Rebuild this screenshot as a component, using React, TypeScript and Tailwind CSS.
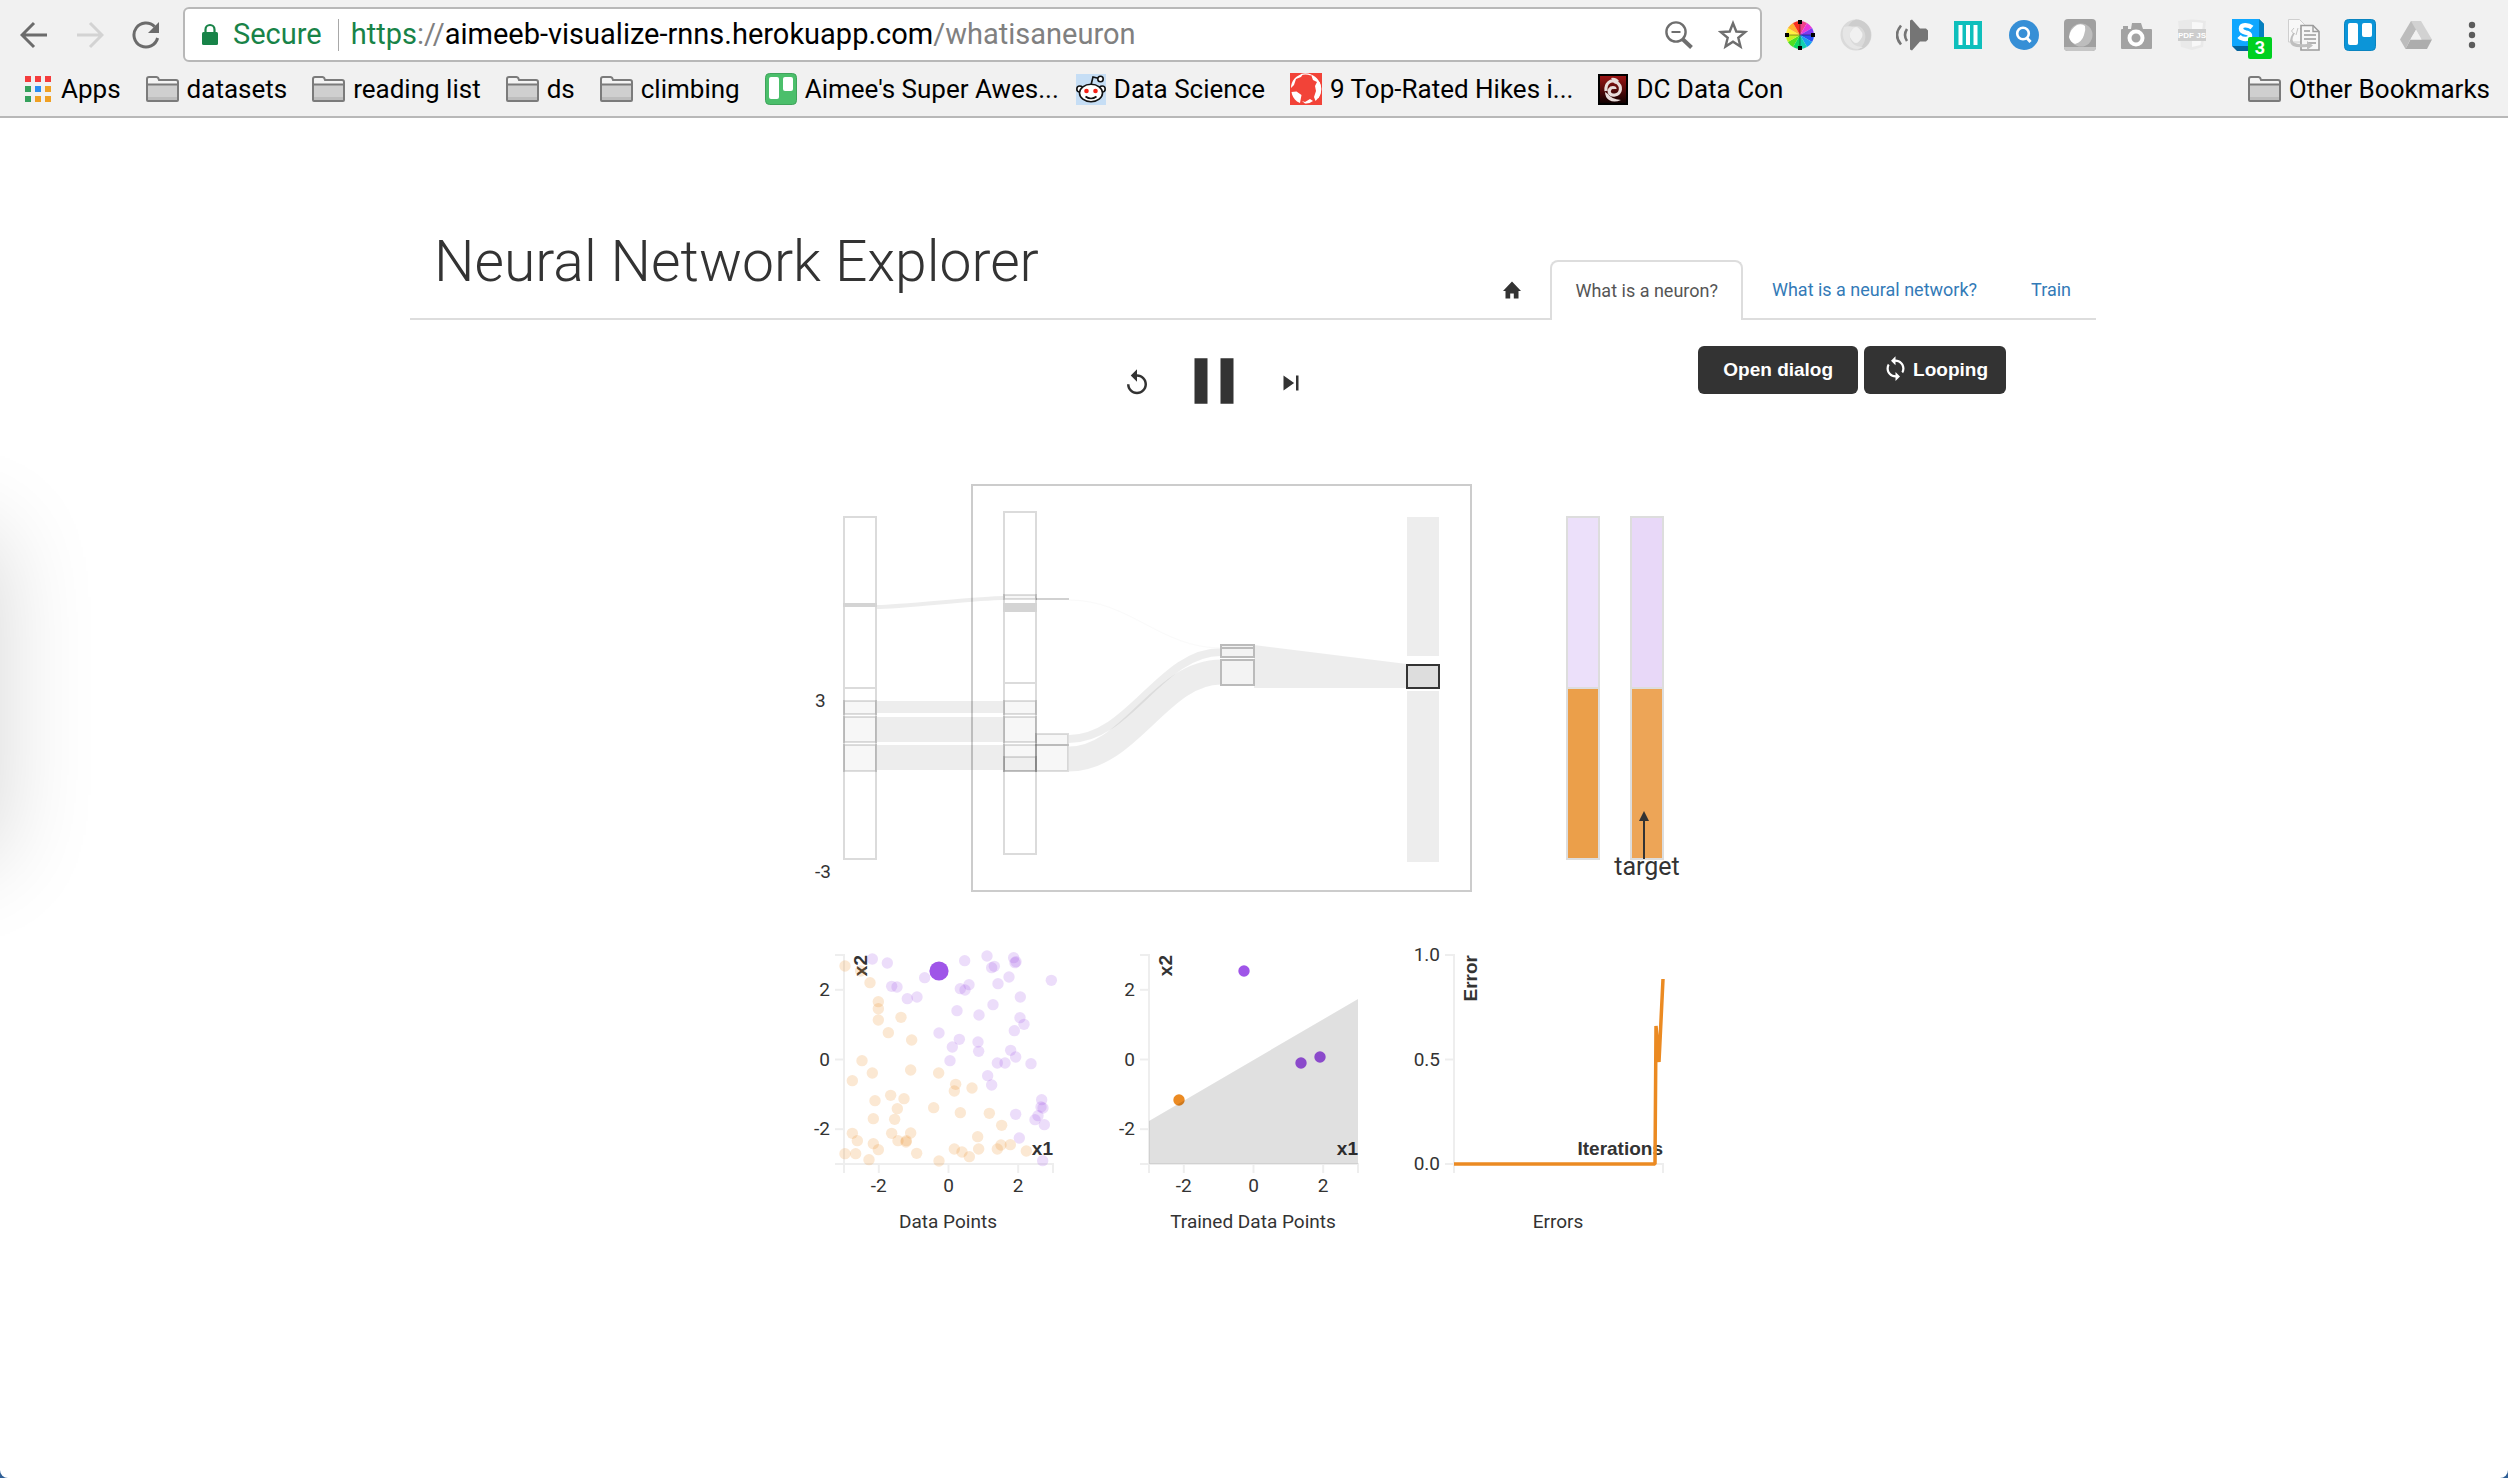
import type { ReactNode } from "react";
import { MdLoop, MdPause, MdReplay, MdSkipNext } from "react-icons/md";

/* ---------- Browser chrome icons ---------- */

function ArrowIcon({ flip = false, color }: { flip?: boolean; color: string }) {
  return (
    <svg width="28" height="28" viewBox="0 0 28 28" fill="none" stroke={color} strokeWidth="3" aria-hidden="true">
      <path d={flip ? "M1 14H26M14 2l12 12-12 12" : "M27 14H2M14 2L2 14l12 12"} />
    </svg>
  );
}

function ReloadIcon() {
  return (
    <svg width="28" height="28" viewBox="0 0 28 28" fill="none" aria-hidden="true">
      <path d="M22.6 5.6A12 12 0 1 0 25.6 17" stroke="#6b6b6b" strokeWidth="3" />
      <path d="M27 1v11H16z" fill="#6b6b6b" />
    </svg>
  );
}

function LockIcon() {
  return (
    <svg width="18" height="24" viewBox="0 0 18 24" aria-hidden="true">
      <path d="M4.5 10V6.5a4.5 4.5 0 0 1 9 0V10" fill="none" stroke="#188348" strokeWidth="2.2" />
      <rect x="1" y="9" width="16" height="13" rx="1.5" fill="#188348" />
    </svg>
  );
}

function ZoomOutIcon() {
  return (
    <svg width="30" height="30" viewBox="0 0 30 30" fill="none" stroke="#6e6e6e" aria-hidden="true">
      <circle cx="12" cy="12" r="9.6" strokeWidth="2.4" />
      <path d="M7.5 12h9" strokeWidth="2" />
      <path d="M18.5 19l9 8.5" strokeWidth="4" />
    </svg>
  );
}

function StarIcon() {
  return (
    <svg width="30" height="30" viewBox="0 0 30 30" fill="none" stroke="#6e6e6e" strokeWidth="2.4" aria-hidden="true">
      <path d="M15 3.2l3.3 8.3 8.900.6-6.900 5.700 2.200 8.700L15 21.700 7.500 26.500l2.200-8.700-6.900-5.700 8.900-.6z" />
    </svg>
  );
}

function FolderIcon() {
  return (
    <svg width="33" height="26" viewBox="0 0 33 26" aria-hidden="true">
      <path d="M1 24V3q0-2 2-2h7.500q1.200 0 1.700 1l.8 2H30q2 0 2 2v18q0 1-1 1H2q-1 0-1-1z" fill="#f4f4f4" stroke="#7b7b7b" strokeWidth="2" />
      <path d="M2 8.500h29V24H2z" fill="#cfcfcf" />
      <path d="M2 21h29v3H2z" fill="#bdbdbd" />
      <path d="M1 8.500h31" stroke="#7b7b7b" strokeWidth="2" />
    </svg>
  );
}

function AppsIcon() {
  const colors = ["#f43c3c", "#f43c3c", "#f43c3c", "#35a15c", "#2b8df0", "#f0a023", "#35a15c", "#f0a023", "#f0a023"];
  return (
    <svg width="26" height="26" viewBox="0 0 26 26" aria-hidden="true">
      {colors.map((c, i) => (
        <rect key={i} x={(i % 3) * 10} y={Math.floor(i / 3) * 10} width="6" height="6" fill={c} />
      ))}
    </svg>
  );
}

function TrelloIcon({ color, edge }: { color: string; edge: string }) {
  return (
    <svg width="32" height="32" viewBox="0 0 32 32" aria-hidden="true">
      <rect x=".5" y=".5" width="31" height="31" rx="4" fill={color} stroke={edge} />
      <rect x="4" y="4" width="10" height="22" rx="2" fill="#fff" />
      <rect x="18" y="4" width="10" height="14" rx="2" fill="#fff" />
    </svg>
  );
}

function RedditIcon() {
  return (
    <svg width="30" height="32" viewBox="0 0 30 32" aria-hidden="true">
      <rect width="30" height="31" y="1" fill="#c6def5" />
      <g fill="#fff" stroke="#111" strokeWidth="1.600">
        <path d="M15 12l2-8 6 1.500" fill="none" />
        <circle cx="24.500" cy="6" r="2.700" />
        <circle cx="3.800" cy="16" r="3" />
        <circle cx="26.200" cy="16" r="3" />
        <ellipse cx="15" cy="20" rx="11.500" ry="8.800" />
        <path d="M9.500 23.500q5.500 4 11 0" fill="none" />
      </g>
      <circle cx="10.500" cy="18" r="2.300" fill="#f52015" />
      <circle cx="19.500" cy="18" r="2.300" fill="#f52015" />
    </svg>
  );
}

function GlobeIcon() {
  return (
    <svg width="32" height="32" viewBox="0 0 32 32" aria-hidden="true">
      <rect width="32" height="32" fill="#f24338" />
      <path d="M13 1C6 2 1 8 1 15l3-3 2-6 5-2zM1.500 19l5-.5 5 3.500-1.500 8-3-1.500C4 26 2 23 1.500 19zM21 1.500c6 2 10 8 10 14.500 0 5-2 9-5.500 12L24 24l2-6-1-5 2-4-4-2zM12 28l3 1 5-3 3 2q-4 3-8 2.500z" fill="#fff" />
      <path d="M11 1.500q5-1.500 10 .5M29 9q4 8-1 16" fill="none" stroke="#fff" strokeWidth="1.200" />
    </svg>
  );
}

function SwirlIcon() {
  return (
    <svg width="30" height="31" viewBox="0 0 30 31" aria-hidden="true">
      <defs>
        <linearGradient id="swirl-bg" x1="0" y1="0" x2="0" y2="1">
          <stop offset="0" stopColor="#a01414" />
          <stop offset="1" stopColor="#0c0000" />
        </linearGradient>
      </defs>
      <rect x="1" y="1" width="28" height="29" fill="url(#swirl-bg)" stroke="#000" strokeWidth="2" />
      <path d="M8 17C7 9 13 5 18 8c7 4 5 12-1 13-5 1-7-3-5-6 1-2 5-2 5 0" fill="none" stroke="#e8dcda" strokeWidth="3.200" />
      <path d="M13 4q5-1 8 3l-4 3zM10 20q3 5 13 6-7 3-12 0-4-3-4-8z" fill="#e8dcda" />
    </svg>
  );
}

/* ---------- Extension icons, 32px each ---------- */

function Ext({ children }: { children: ReactNode }) {
  return (
    <svg width="32" height="32" viewBox="0 0 32 32" aria-hidden="true">
      {children}
    </svg>
  );
}

const WHEEL = ["#f0428a", "#e838d8", "#7a3cf0", "#2a50f5", "#18a0f0", "#10d0b0", "#10d860", "#50e020", "#c8f020", "#fff040", "#ffb030", "#f83020"];

function ColorWheelIcon() {
  const p = (a: number) => `${16 + 14 * Math.cos(a)} ${16 + 14 * Math.sin(a)}`;
  return (
    <Ext>
      {WHEEL.map((c, i) => {
        const a = -Math.PI / 2 + (i * Math.PI) / 6;
        return <path key={c} d={`M16 16L${p(a)}A14 14 0 0 1 ${p(a + Math.PI / 6)}z`} fill={c} />;
      })}
      <path d="M16 3v26M3 16h26" stroke="#000" strokeOpacity=".4" />
      <path d="M16 1v4M16 27v4M1 16h4M27 16h4" stroke="#000" strokeWidth="4" />
    </Ext>
  );
}

function RingIcon() {
  return (
    <Ext>
      <circle cx="16" cy="16" r="11" fill="none" stroke="#dadada" strokeWidth="9" />
      <path d="M16 .5a15.500 15.500 0 0 1 15 15.500 15 15 0 0 1-13 15c7-5 9-13 6-19-2-4-5-5-8-5-4 0-7 3-8 6C7 6 11 2 16 .5z" fill="#cdcdcd" />
      <path d="M4 8c-3 7-1 15 6 20 5 3 10 2 13 0-8 0-12-4-13-9-1-4 1-9 5-11-5-1-8-1-11 0z" fill="#e6e6e6" />
      <ellipse cx="16" cy="16" rx="5" ry="8" fill="#f1f1f1" />
    </Ext>
  );
}

function SpeakerIcon() {
  return (
    <Ext>
      <path d="M14 1.500l2-1 8 9h6l2 2v9l-2 2h-6l-8 9-2-1z" fill="#757575" />
      <path d="M11 10q-4 6 0 12M5 6.500q-8 9.500 0 19" fill="none" stroke="#757575" strokeWidth="2.600" />
    </Ext>
  );
}

function ColumnsIcon() {
  return (
    <Ext>
      <rect x="2" y="2" width="28" height="28" fill="#0fbfbc" />
      <path d="M8.500 6v20M16 6v20M23.500 6v20" stroke="#fff" strokeWidth="4" />
    </Ext>
  );
}

function SearchBadgeIcon() {
  return (
    <Ext>
      <circle cx="16" cy="16" r="15" fill="#368fd6" />
      <circle cx="15" cy="14.500" r="5.800" fill="none" stroke="#fff" strokeWidth="2.600" />
      <path d="M18.500 18.500l4 4.500" stroke="#fff" strokeWidth="3" />
    </Ext>
  );
}

function OrbIcon() {
  return (
    <Ext>
      <rect width="32" height="32" rx="4" fill="#a0a0a0" />
      <circle cx="17" cy="16" r="11.500" fill="#bdbdbd" />
      <path d="M0 28h32q0 4-4 4H4q-4 0-4-4z" fill="#c6c6c6" />
      <path d="M13 6q5-2 8 1 1 4-1 9-2 7-9 9-5-2-6-7 1-8 8-12z" fill="#fff" />
    </Ext>
  );
}

function CameraIcon() {
  return (
    <Ext>
      <path d="M2 10h1V7h5v3h3l1-6h9l2 6h8q1 0 1 1v18q0 1-1 1H2q-1 0-1-1V11q0-1 1-1z" fill="#a3a3a3" />
      <circle cx="16" cy="19" r="6.500" fill="none" stroke="#fff" strokeWidth="4" />
    </Ext>
  );
}

function PdfJsIcon() {
  return (
    <Ext>
      <path d="M2 2q14-3 28 0l-3 26-11 3-11-3z" fill="#e9e9e9" />
      <path d="M16 3q6 0 11 1l-2.500 22L16 28z" fill="#f8f8f8" />
      <rect x="2" y="10" width="28" height="12" fill="#cdcdcd" />
      <text x="16" y="19" textAnchor="middle" fontSize="8" fontWeight="700" fill="#fff" className="font-['Liberation_Sans']">PDF JS</text>
    </Ext>
  );
}

function SBlockIcon() {
  return (
    <Ext>
      <path d="M27 0l5 5v22l-5 0zM0 27h27l5 5H5z" fill="#04639c" />
      <path d="M27 0l5 5v22h-5z" fill="#0580bf" />
      <rect width="27" height="27" fill="#0fa7ff" />
      <path d="M20 8.500q-3-2.500-7-2.300-4 .3-4 3.300t4.500 4q4.500.8 4.500 3.300 0 3-4.500 3.200-4 0-6.500-2.500" fill="none" stroke="#fff" strokeWidth="4.500" />
    </Ext>
  );
}

function CopyDocIcon() {
  return (
    <Ext>
      <path d="M.5 .5h11l5 5V23H.5z" fill="#f8f8f8" stroke="#cfcfcf" />
      <path d="M6 9l-2.500 3L6 15M10 9l-2 7M12 9l2.500 3" fill="none" stroke="#c4c4c4" />
      <path d="M13 6.500h12l6 6V31H13z" fill="#f7f7f7" stroke="#9c9c9c" strokeWidth="1.600" />
      <path d="M25 6.500v6h6M16 12h6M16 16h12M16 20h12M19 24h9" fill="none" stroke="#9c9c9c" strokeWidth="1.400" />
      <path d="M7 14q-5 8 0 10 4 2 12 1v-3l6 4.500-6 4.500v-3q-10 1-14-1-6-4 0-13z" fill="#bfbfbf" />
    </Ext>
  );
}

function DriveIcon() {
  return (
    <Ext>
      <path d="M11 2h10L10 21l-4.500 9L0 20.500z" fill="#bcbcbc" />
      <path d="M11 2h10l11 18.500H21.500z" fill="#d2d2d2" />
      <path d="M10.500 20.500H32L27 30H5.500z" fill="#adadad" />
      <path d="M16 11l5.500 9.500h-11z" fill="#f1f1f1" />
    </Ext>
  );
}

function DotsIcon() {
  return (
    <Ext>
      <g fill="#5c5c5c">
        <circle cx="16" cy="6" r="3.200" />
        <circle cx="16" cy="16" r="3.200" />
        <circle cx="16" cy="26" r="3.200" />
      </g>
    </Ext>
  );
}

const EXTENSIONS: { name: string; icon: ReactNode; badge?: string }[] = [
  { name: "Color picker", icon: <ColorWheelIcon /> },
  { name: "Ring", icon: <RingIcon /> },
  { name: "Speaker", icon: <SpeakerIcon /> },
  { name: "Columns", icon: <ColumnsIcon /> },
  { name: "Search", icon: <SearchBadgeIcon /> },
  { name: "Orb", icon: <OrbIcon /> },
  { name: "Camera", icon: <CameraIcon /> },
  { name: "PDF viewer", icon: <PdfJsIcon /> },
  { name: "Blocks", icon: <SBlockIcon />, badge: "3" },
  { name: "Copy as document", icon: <CopyDocIcon /> },
  { name: "Boards", icon: <TrelloIcon color="#0c95d8" edge="#0a84c0" /> },
  { name: "Drive", icon: <DriveIcon /> },
  { name: "Menu", icon: <DotsIcon /> },
];

const BOOKMARKS: { label: string; icon: ReactNode; tight?: boolean }[] = [
  { label: "Apps", icon: <AppsIcon /> },
  { label: "datasets", icon: <FolderIcon /> },
  { label: "reading list", icon: <FolderIcon /> },
  { label: "ds", icon: <FolderIcon /> },
  { label: "climbing", icon: <FolderIcon /> },
  { label: "Aimee's Super Awes...", icon: <TrelloIcon color="#4bbf6b" edge="#3fa35b" />, tight: true },
  { label: "Data Science", icon: <RedditIcon /> },
  { label: "9 Top-Rated Hikes i...", icon: <GlobeIcon /> },
  { label: "DC Data Con", icon: <SwirlIcon /> },
];

function BrowserBar() {
  return (
    <header className="border-b-2 border-[#b8b8b8] bg-[#f1f1f1] font-['Roboto',sans-serif] text-black">
      <div className="flex items-center pt-[7px] pr-5 pl-5">
        <div className="flex items-center gap-7">
          <button type="button" aria-label="Back"><ArrowIcon color="#6b6b6b" /></button>
          <button type="button" aria-label="Forward"><ArrowIcon flip color="#d3d3d3" /></button>
          <button type="button" aria-label="Reload"><ReloadIcon /></button>
        </div>
        <div className="ml-[23px] flex h-[55px] flex-1 items-center rounded-md border-2 border-[#b8b8b8] bg-white pr-3 pl-4 text-[29px]">
          <LockIcon />
          <span className="ml-3.5 text-[#188348]">Secure</span>
          <span className="mr-3 ml-4 h-8 w-px bg-[#a8a8a8]" />
          <div role="textbox" aria-label="Address" className="flex-1 whitespace-nowrap">
            <span className="text-[#188348]">https</span>
            <span className="text-[#808080]">://</span>
            aimeeb-visualize-rnns.herokuapp.com
            <span className="text-[#808080]">/whatisaneuron</span>
          </div>
          <button type="button" aria-label="Zoom out" className="mr-6"><ZoomOutIcon /></button>
          <button type="button" aria-label="Bookmark this page"><StarIcon /></button>
        </div>
        <div className="ml-[22px] flex items-center gap-6">
          {EXTENSIONS.map((e) => (
            <button key={e.name} type="button" aria-label={e.name} className="relative">
              {e.icon}
              {e.badge && (
                <span className="absolute -right-2 -bottom-2 h-[22px] w-6 rounded-xs bg-[#00d020] text-center text-lg leading-[22px] font-bold text-white">
                  {e.badge}
                </span>
              )}
            </button>
          ))}
        </div>
      </div>
      <nav aria-label="Bookmarks" className="flex h-[54px] items-center gap-[25px] pr-[18px] pl-[25px] text-[26px] whitespace-nowrap">
        {BOOKMARKS.map((b, i) => (
          <a key={b.label} href="#" className={`flex items-center ${i === 0 ? "gap-2.5" : "gap-2"} ${b.tight ? "-mr-2" : ""}`}>
            {b.icon}
            {b.label}
          </a>
        ))}
        <a href="#" className="ml-auto flex items-center gap-2">
          <FolderIcon />
          Other Bookmarks
        </a>
      </nav>
    </header>
  );
}

/* ---------- Network diagram ---------- */

/* Centre line of a Sankey link, stroked at the link's thickness. */
function link(x0: number, y0: number, x1: number, y1: number, curvature = 0.4) {
  const d = (x1 - x0) * curvature;
  return `M${x0} ${y0}C${x0 + d} ${y0} ${x1 - d} ${y1} ${x1} ${y1}`;
}

const OUTLINES = [
  [844, 517, 688, 859],
  [1004, 512, 683, 854],
];
const NODES = [
  [844, 701, 714], [844, 717, 742], [844, 745, 771],
  [1004, 701, 714], [1004, 717, 742], [1004, 745, 771], [1004, 757, 771], [1004, 595, 599],
  [1036, 734, 745], [1036, 745, 771],
];

function NetworkDiagram() {
  return (
    <svg width="915" height="420" viewBox="796 480 915 420" role="img" aria-label="Neuron diagram" className="mx-auto mt-15 block max-w-full">
      <rect x="972" y="485" width="499" height="406" fill="none" stroke="#ccc" strokeWidth="2" />
      <g fill="#000" fillOpacity=".07">
        <rect x="877" y="701" width="126" height="12" />
        <rect x="877" y="717" width="126" height="25" />
        <rect x="877" y="745" width="126" height="25" />
        <path d="M1254 645L1407 664V688H1254z" />
      </g>
      <g fill="none" stroke="#000" strokeOpacity=".07">
        <path d={link(877, 607, 1003, 598, 0.2)} strokeWidth="4" />
        <path d={link(1069, 739, 1221, 652)} strokeWidth="8" />
        <path d={link(1069, 759, 1221, 672)} strokeWidth="25" />
      </g>
      <path d={link(1069, 600, 1221, 648)} fill="none" stroke="#fafafa" />
      <g fill="none" stroke="#000" strokeOpacity=".14" strokeWidth="2">
        {OUTLINES.map(([x, top, mid, bottom]) => (
          <path key={x} d={`M${x} ${top}h32V${bottom}h-32zM${x + 1} ${mid}h30`} />
        ))}
      </g>
      <g fill="#000" fillOpacity=".03" stroke="#000" strokeOpacity=".13" strokeWidth="2">
        {NODES.map(([x, y0, y1]) => (
          <rect key={`${x}-${y0}`} x={x} y={y0} width="32" height={y1 - y0} />
        ))}
      </g>
      <path d="M1036 599h33" stroke="#000" strokeOpacity=".18" strokeWidth="2" />
      <rect x="843" y="603" width="34" height="4" fill="#d4d4d4" />
      <rect x="1003" y="603" width="34" height="9" fill="#d4d4d4" />
      <g fill="#f3f3f3" stroke="#bbb" strokeWidth="2">
        <rect x="1221" y="645" width="33" height="3" />
        <rect x="1221" y="648" width="33" height="9" />
        <rect x="1221" y="660" width="33" height="25" />
      </g>
      <rect x="1407" y="517" width="32" height="139" fill="#ededed" />
      <rect x="1407" y="691" width="32" height="171" fill="#ededed" />
      <rect x="1407" y="665" width="32" height="23" fill="#ddd" stroke="#333" strokeWidth="2" />
      <g stroke="#ddd" strokeWidth="2">
        <rect x="1567" y="688" width="32" height="171" fill="#eb9f4a" />
        <rect x="1567" y="517" width="32" height="171" fill="#ece0fa" />
        <rect x="1631" y="688" width="32" height="171" fill="#eda557" />
        <rect x="1631" y="517" width="32" height="171" fill="#e8d8f8" />
      </g>
      <path d="M1644 859V820" stroke="#333" strokeWidth="2" />
      <path d="M1644 811l5 10h-10z" fill="#333" />
      <g fill="#333" fontSize="19" className="font-normal">
        <text x="815" y="707">3</text>
        <text x="815" y="878">-3</text>
        <text x="1647" y="875" fontSize="25" textAnchor="middle">target</text>
      </g>
    </svg>
  );
}

/* ---------- Charts ---------- */

const PLOT = 209;
const scale = (v: number) => ((v + 3) / 6) * PLOT;
const ORANGE = "#eb8a22";
const PURPLE = "#9f55e8";

/* Sample positions in thirds of a pixel from the plot's top-left corner. */
const ORANGE_POINTS = [
  [3, 33], [50, 48], [78, 83], [103, 140], [103, 161], [103, 195], [171, 187], [133, 233], [203, 255], [54, 317],
  [85, 354], [200, 345], [284, 354], [25, 377], [140, 421], [180, 431], [93, 437], [335, 388], [331, 408], [384, 399],
  [269, 458], [160, 461], [349, 473], [436, 475], [88, 491], [152, 493], [473, 511], [25, 535], [143, 535], [200, 534],
  [40, 557], [162, 557], [187, 557], [186, 561], [88, 566], [103, 584], [401, 545], [404, 582], [331, 582], [354, 591],
  [376, 605], [460, 582], [471, 570], [499, 569], [547, 588], [3, 596], [35, 596], [75, 614], [218, 595], [285, 618],
];
const PURPLE_POINTS = [
  [85, 12], [130, 24], [242, 68], [143, 94], [159, 96], [190, 131], [219, 126], [362, 17], [429, 3], [509, 8],
  [513, 23], [516, 20], [443, 38], [451, 34], [495, 66], [462, 86], [375, 89], [349, 101], [363, 105], [622, 76],
  [529, 126], [447, 149], [339, 167], [405, 180], [528, 188], [540, 208], [511, 227], [285, 234], [346, 253], [325, 276],
  [402, 261], [404, 289], [318, 317], [500, 286], [515, 306], [460, 324], [483, 324], [561, 326], [431, 362], [443, 390],
  [593, 434], [591, 456], [597, 459], [582, 482], [573, 494], [601, 509], [515, 478], [526, 549], [596, 617],
];

type ChartProps = {
  title: string;
  xTicks: { at: number; label: string }[];
  yTicks: { at: number; label: string }[];
  xLabel: string;
  yLabel: string;
  children: ReactNode;
};

function Chart({ title, xTicks, yTicks, xLabel, yLabel, children }: ChartProps) {
  return (
    <figure className="w-[305px]">
      <svg width="305" height="260" viewBox="-48 -15 305 260" role="img" aria-label={title} className="block max-w-full">
        <path d={`M-9 0H0V${PLOT + 9}M-9 ${PLOT}H${PLOT}V${PLOT + 9}`} fill="none" stroke="#eee" strokeWidth="2" />
        {xTicks.map((t) => (
          <g key={t.label}>
            <path d={`M${t.at} ${PLOT}v9`} stroke="#eee" strokeWidth="2" />
            <text x={t.at} y={PLOT + 28} textAnchor="middle" fontSize="19" fill="#333">{t.label}</text>
          </g>
        ))}
        {yTicks.map((t) => (
          <g key={t.label}>
            <path d={`M-9 ${t.at}h9`} stroke="#eee" strokeWidth="2" />
            <text x="-14" y={t.at + 6} textAnchor="end" fontSize="19" fill="#333">{t.label}</text>
          </g>
        ))}
        <g className="font-['Liberation_Sans',Arial,sans-serif] font-bold" fontSize="19" fill="#333" textAnchor="end">
          <text transform="rotate(-90)" x="0" y="23">{yLabel}</text>
          <text x="209" y="200">{xLabel}</text>
        </g>
        {children}
      </svg>
      <figcaption className="mt-2 text-center text-[19px] leading-7">{title}</figcaption>
    </figure>
  );
}

const X_TICKS = [-2, 0, 2].map((v) => ({ at: scale(v), label: String(v) }));
const Y_TICKS = [2, 0, -2].map((v) => ({ at: scale(-v), label: String(v) }));
const ERROR_TICKS = [
  { at: 0, label: "1.0" },
  { at: PLOT / 2, label: "0.5" },
  { at: PLOT, label: "0.0" },
];

function Charts() {
  return (
    <section className="mt-10 flex flex-wrap justify-center font-normal">
      <Chart title="Data Points" xTicks={X_TICKS} yTicks={Y_TICKS} xLabel="x1" yLabel="x2">
        <g fillOpacity=".2">
          {ORANGE_POINTS.map(([x, y], i) => (
            <circle key={i} cx={x / 3} cy={y / 3} r="5.7" fill={ORANGE} />
          ))}
          {PURPLE_POINTS.map(([x, y], i) => (
            <circle key={i} cx={x / 3} cy={y / 3} r="5.7" fill={PURPLE} />
          ))}
        </g>
        <circle cx="95" cy="16" r="9.600" fill={PURPLE} />
      </Chart>
      <Chart title="Trained Data Points" xTicks={X_TICKS} yTicks={Y_TICKS} xLabel="x1" yLabel="x2">
        <circle cx="95" cy="16" r="5.700" fill={PURPLE} />
        <circle cx="152" cy="108" r="5.700" fill={PURPLE} />
        <circle cx="171" cy="102" r="5.700" fill={PURPLE} />
        <circle cx="30" cy="145" r="5.700" fill={ORANGE} />
        <path d="M0 166L209 44V209H0z" fill="#000" fillOpacity=".12" />
      </Chart>
      <Chart title="Errors" xTicks={[]} yTicks={ERROR_TICKS} xLabel="Iterations" yLabel="Error">
        <path d="M0 209H201L202 71 205 107 209 24" fill="none" stroke={ORANGE} strokeWidth="3.500" strokeLinejoin="bevel" />
      </Chart>
    </section>
  );
}

/* ---------- Page ---------- */

function Tab({ children, active = false }: { children: ReactNode; active?: boolean }) {
  return (
    <li className="mr-1 last:mr-0">
      <a
        href="#"
        aria-current={active ? "page" : undefined}
        className={
          active
            ? "flex h-[60px] items-center rounded-t-lg border-2 border-b-0 border-[#ddd] bg-white px-[23px] text-[#555]"
            : "flex h-[60px] items-center px-[25px] text-[#337ab7]"
        }
      >
        {children}
      </a>
    </li>
  );
}

function PageHeader() {
  return (
    <div className="mt-28 flex items-end justify-between border-b-2 border-[#ddd] pl-6">
      <h1 className="pb-6 text-[57px] leading-[64px]">Neural Network Explorer</h1>
      <ul className="-mb-0.5 flex text-lg font-normal">
        <Tab>
          <svg width="18" height="18" viewBox="0 0 18 18" fill="#333" role="img" aria-label="Home">
            <path d="M9 .5L0 10h2.500v7.500h4.700v-5h3.600v5h4.700V10H18z" />
          </svg>
        </Tab>
        <Tab active>What is a neuron?</Tab>
        <Tab>What is a neural network?</Tab>
        <Tab>Train</Tab>
      </ul>
    </div>
  );
}

function Controls() {
  return (
    <div className="mt-[22px] grid grid-cols-[1fr_auto_1fr] items-start pr-[90px] pl-3">
      <div className="col-start-2 flex items-center gap-[23px]">
        <button type="button" aria-label="Restart" className="pt-1"><MdReplay size={30} /></button>
        <button type="button" aria-label="Pause"><MdPause size={78} /></button>
        <button type="button" aria-label="Step forward" className="pt-1"><MdSkipNext size={30} /></button>
      </div>
      <div className="mt-1 flex justify-end gap-1.5 font-['Liberation_Sans',Arial,sans-serif] text-[19px] font-bold text-white">
        <button type="button" className="h-12 rounded-md bg-[#333] px-[25px]">Open dialog</button>
        <button type="button" className="flex h-12 items-center gap-1 rounded-md bg-[#333] px-[18px]">
          <MdLoop size={27} className="mb-1" />
          Looping
        </button>
      </div>
    </div>
  );
}

export default function App() {
  return (
    <div className="min-h-screen bg-[#2f5f96]">
      <div className="relative min-h-screen overflow-hidden rounded-b-lg bg-white">
        <div className="absolute top-[530px] -left-[300px] h-[324px] w-[300px] shadow-[0_4px_90px_rgba(0,0,0,0.16)]" />
        <BrowserBar />
        <div className="pr-0.5">
          <main className="mx-auto w-full max-w-[1686px] pb-16 font-['Roboto',sans-serif] font-light text-[#333]">
            <PageHeader />
            <Controls />
            <NetworkDiagram />
            <Charts />
          </main>
        </div>
      </div>
    </div>
  );
}
